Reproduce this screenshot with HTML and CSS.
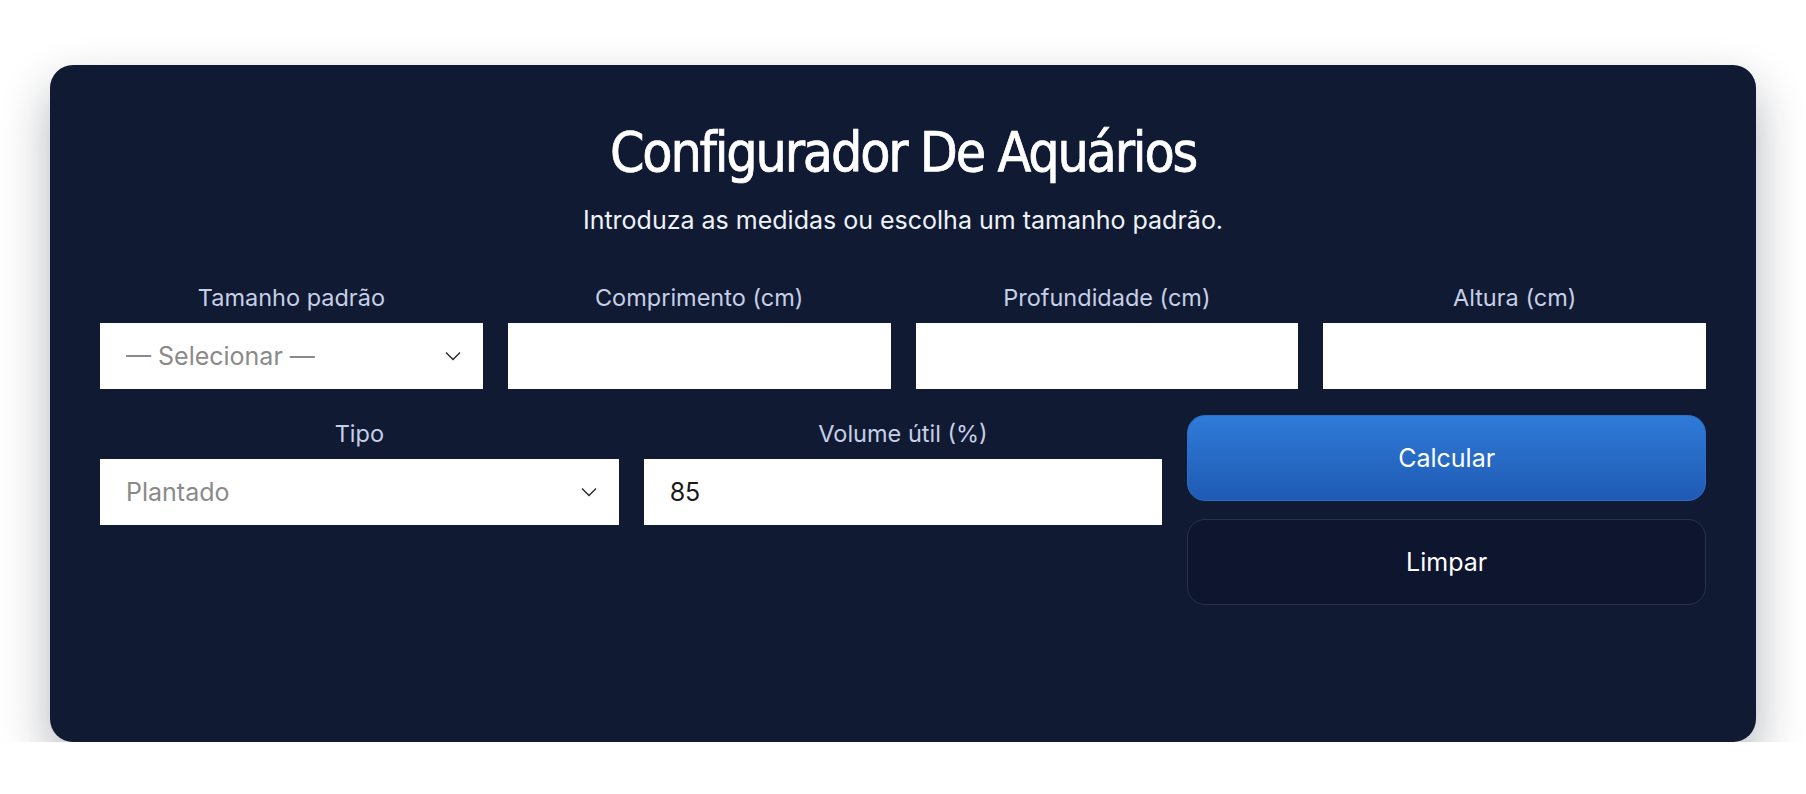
FILE: index.html
```html
<!DOCTYPE html>
<html lang="pt">
<head>
    <meta charset="UTF-8">
    <title>Configurador De Aquários</title>
    <link rel="stylesheet" href="styles.css">
</head>
<body>

<div class="card">
    <h1 class="title">Configurador De Aquários</h1>
    <p class="subtitle">Introduza as medidas ou escolha um tamanho padrão.</p>

    <div class="row row-4">
        <div class="field">
            <label for="preset">Tamanho padrão</label>
            <div class="select-wrap">
                <select id="preset" class="muted">
                    <option>— Selecionar —</option>
                    <option>60 x 30 x 36</option>
                    <option>80 x 35 x 40</option>
                    <option>100 x 40 x 50</option>
                </select>
                <svg class="chevron" width="16" height="10" viewBox="0 0 16 10"><path d="M1 1.5l7 7 7-7" fill="none" stroke="#222" stroke-width="1.3"/></svg>
            </div>
        </div>
        <div class="field">
            <label for="comp">Comprimento (cm)</label>
            <input id="comp" type="number">
        </div>
        <div class="field">
            <label for="prof">Profundidade (cm)</label>
            <input id="prof" type="number">
        </div>
        <div class="field">
            <label for="alt">Altura (cm)</label>
            <input id="alt" type="number">
        </div>
    </div>

    <div class="row row-3">
        <div class="field field-low">
            <label for="tipo">Tipo</label>
            <div class="select-wrap">
                <select id="tipo" class="muted">
                    <option>Plantado</option>
                    <option>Comunitário</option>
                    <option>Marinho</option>
                </select>
                <svg class="chevron" width="16" height="10" viewBox="0 0 16 10"><path d="M1 1.5l7 7 7-7" fill="none" stroke="#222" stroke-width="1.3"/></svg>
            </div>
        </div>
        <div class="field field-low">
            <label for="util">Volume útil (%)</label>
            <input id="util" type="number" value="85">
        </div>
        <div class="actions">
            <button class="btn btn-primary">Calcular</button>
            <button class="btn btn-ghost">Limpar</button>
        </div>
    </div>
</div>

</body>
</html>
```

FILE: styles.css
```css
body {
    margin: 0;
    background: #ffffff;
    font-family: "Inter", "Noto Sans", sans-serif;
}
.card {
    width: 1706px;
    min-height: 677px;
    box-sizing: border-box;
    margin: 65px auto 0;
    padding: 54px 50px 50px;
    background: #111a33;
    border-radius: 23px;
    box-shadow: 0 22px 48px rgba(20, 25, 40, 0.32);
}
.title {
    margin: 0;
    text-align: center;
    color: #ffffff;
    font-family: "DejaVu Sans Condensed", "DejaVu Sans", sans-serif;
    font-weight: 400;
    font-size: 55px;
    line-height: 66px;
    letter-spacing: -2.2px;
    -webkit-text-stroke: 0.7px #ffffff;
}
.subtitle {
    margin: 19px 0 0;
    text-align: center;
    color: #eef2f9;
    font-size: 25px;
    line-height: 32px;
}
.row {
    display: grid;
    gap: 25px;
}
.row-4 {
    grid-template-columns: repeat(4, 1fr);
    margin-top: 47px;
}
.row-3 {
    grid-template-columns: repeat(3, 1fr);
    margin-top: 26px;
    align-items: start;
}
.field {
    display: flex;
    flex-direction: column;
}
.field-low {
    padding-top: 4px;
}
.field label {
    text-align: center;
    color: #c5cfe6;
    font-size: 23.5px;
    line-height: 30px;
    margin-bottom: 10px;
}
.field input,
.field select {
    width: 100%;
    height: 66px;
    box-sizing: border-box;
    border: none;
    border-radius: 0;
    background: #ffffff;
    padding: 0 26px;
    font-family: "Inter", "Noto Sans", sans-serif;
    font-size: 25px;
    color: #1a1a1a;
    outline: none;
}
.field select {
    appearance: none;
    -webkit-appearance: none;
}
.field select.muted {
    color: #8a8a8a;
}
.field input::-webkit-outer-spin-button,
.field input::-webkit-inner-spin-button {
    -webkit-appearance: none;
    margin: 0;
}
.select-wrap {
    position: relative;
}
.chevron {
    position: absolute;
    right: 22px;
    top: 28px;
    pointer-events: none;
}
.actions {
    display: flex;
    flex-direction: column;
    gap: 18px;
}
.btn {
    height: 86px;
    border-radius: 18px;
    font-family: "Inter", "Noto Sans", sans-serif;
    font-size: 25px;
    color: #ffffff;
    cursor: pointer;
}
.btn-primary {
    border: 1px solid #2c6fc9;
    background: linear-gradient(#2f7bd8, #1f5ab3);
}
.btn-ghost {
    border: 1px solid #283250;
    background: #0e152e;
}
```
